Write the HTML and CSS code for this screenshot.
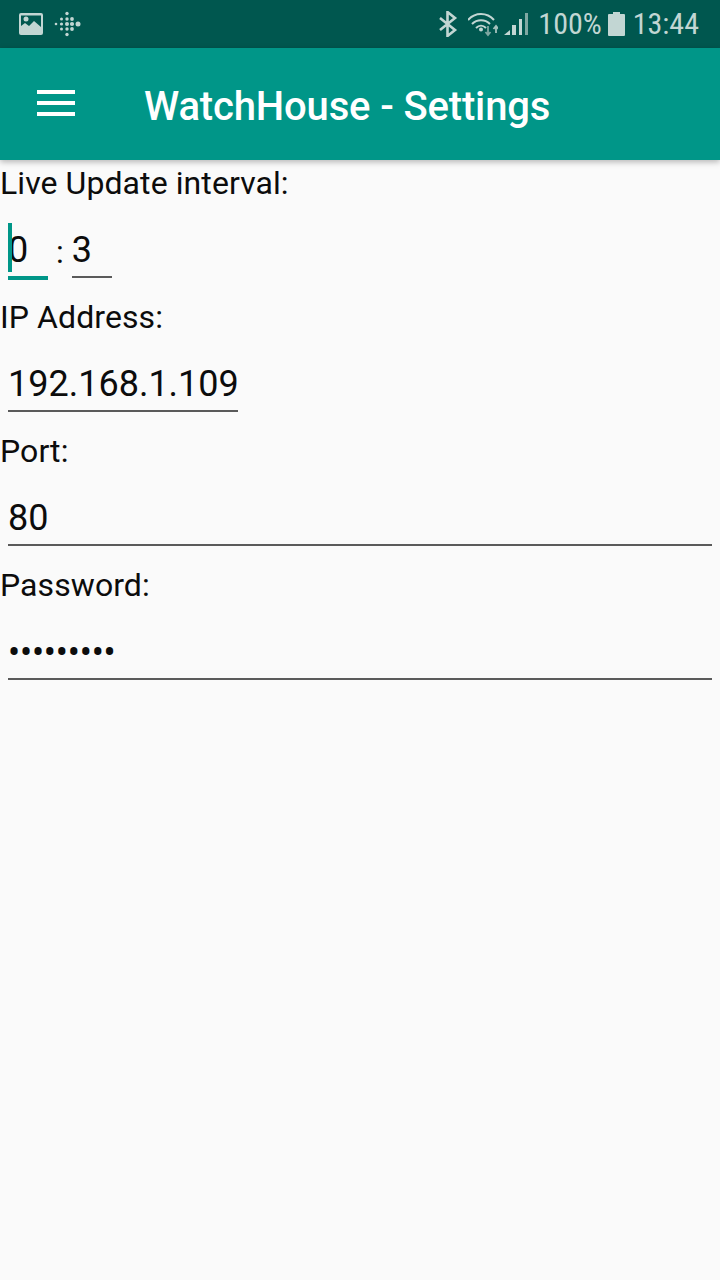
FILE: index.html
```html
<!DOCTYPE html>
<html lang="en">
<head>
<meta charset="utf-8">
<title>WatchHouse - Settings</title>
<link rel="stylesheet" href="styles.css">
</head>
<body>
<div class="status">
  <div class="status-left">
    <svg class="ic-pic" width="26" height="24" viewBox="0 0 26 24"><path fill="#c2d6d3" fill-rule="evenodd" d="M3 1h20a2 2 0 0 1 2 2v18a2 2 0 0 1-2 2H3a2 2 0 0 1-2-2V3a2 2 0 0 1 2-2zm0 2.500V14l4-3 4 3 5-5 7 6V3.500H3z"/><circle cx="8" cy="7" r="2.500" fill="#c2d6d3"/></svg>
    <svg class="ic-fit" width="28" height="26" viewBox="0 0 28 26" fill="#c2d6d3"><circle cx="14" cy="2.500" r="1.700"/><circle cx="3" cy="13" r="1.300"/><circle cx="8.500" cy="8" r="1.500"/><circle cx="8.500" cy="13" r="1.600"/><circle cx="8.500" cy="18" r="1.500"/><circle cx="14" cy="8" r="1.700"/><circle cx="14" cy="13" r="2"/><circle cx="14" cy="18" r="1.700"/><circle cx="19" cy="8" r="1.900"/><circle cx="19" cy="13" r="2.100"/><circle cx="19" cy="18" r="1.900"/><circle cx="25" cy="13" r="2.500"/><circle cx="14" cy="23.500" r="1.700"/></svg>
  </div>
  <div class="status-right">
    <svg class="ic-bt" width="20" height="26" viewBox="0 0 20 26" fill="none" stroke="#c2d6d3" stroke-width="2.600"><path d="M2 7l15 12-7.500 6V1L17 7 2 19"/></svg>
    <svg class="ic-wifi" width="30" height="26" viewBox="0 0 30 26" fill="none"><path d="M0 9C7 1 19 1 26 9M4 13c5-5 13-5 18 0M8 17c3-3 7-3 10 0" stroke="#c2d6d3" stroke-width="2"/><circle cx="13" cy="18.500" r="2" fill="#c2d6d3"/><path d="M20 15v9M17.500 21l2.500 3 2.500-3" stroke="#7fa8a2" stroke-width="1.800"/><path d="M28 22v-7M25.500 18l2.500-3 2.500 3" stroke="#a5c2bd" stroke-width="1.800"/></svg>
    <svg class="ic-sig" width="24" height="26" viewBox="0 0 24 26"><path fill="#c2d6d3" d="M0 24l6-5v5z"/><rect x="8" y="14" width="4" height="10" fill="#c2d6d3"/><rect x="15" y="8" width="3" height="16" fill="#c2d6d3"/><rect x="21" y="2" width="3" height="22" fill="#7fa8a2"/></svg>
    <span class="pct">100%</span>
    <svg class="ic-bat" width="17" height="24" viewBox="0 0 17 24"><path fill="#c2d6d3" d="M5 0h7v2h4a1 1 0 0 1 1 1v20a1 1 0 0 1-1 1H1a1 1 0 0 1-1-1V3a1 1 0 0 1 1-1h4z"/></svg>
    <span class="time">13:44</span>
  </div>
</div>
<header class="appbar">
  <div class="menu"><span></span><span></span><span></span></div>
  <h1 class="title">WatchHouse - Settings</h1>
</header>
<main class="form">
  <section class="field">
    <div class="label">Live Update interval:</div>
    <div class="interval">
      <div class="input input-short input-focus"><span class="caret"></span>0</div>
      <span class="colon">:</span>
      <div class="input input-short">3</div>
    </div>
  </section>
  <section class="field">
    <div class="label">IP Address:</div>
    <div class="input input-ip">192.168.1.109</div>
  </section>
  <section class="field">
    <div class="label">Port:</div>
    <div class="input input-wide">80</div>
  </section>
  <section class="field">
    <div class="label">Password:</div>
    <div class="input input-wide input-pass">•••••••••</div>
  </section>
</main>
</body>
</html>
```
FILE: styles.css
```css
* { box-sizing: border-box; }
html, body { margin: 0; padding: 0; }
body {
  width: 720px;
  height: 1280px;
  overflow: hidden;
  background: #fafafa;
  font-family: Roboto, "Noto Sans", sans-serif;
  color: #0c0c0c;
}
.status {
  height: 48px;
  background: #00574f;
  display: flex;
  justify-content: space-between;
  align-items: center;
  padding: 0 21px 0 18px;
  color: #c2d6d3;
}
.status-left, .status-right { display: flex; align-items: center; }
.ic-pic { margin-right: 9px; }
.ic-bt { margin-right: 10px; }
.ic-wifi { margin-right: 6px; }
.ic-sig { margin-right: 10px; }
.pct, .time { font-size: 30px; line-height: 48px; font-stretch: condensed; }
.pct { margin-right: 6px; }
.ic-bat { margin-right: 8px; }
.appbar {
  height: 112px;
  background: #009688;
  display: flex;
  align-items: center;
  box-shadow: 0 2px 6px rgba(0, 0, 0, 0.28);
  position: relative;
}
.menu {
  width: 38px;
  margin-left: 37px;
  display: flex;
  flex-direction: column;
  gap: 7px;
  margin-bottom: 2px;
}
.menu span { height: 4px; background: #fff; }
.title {
  margin: 0 0 0 69px;
  font-size: 40px;
  font-weight: 500;
  color: #fff;
  letter-spacing: -0.15px;
  line-height: 48px;
  padding-top: 6px;
}
.field { height: 134px; display: flex; flex-direction: column; }
.label {
  font-size: 32px;
  letter-spacing: 0.08px;
  line-height: 46px;
  height: 46px;
}
.input {
  position: relative;
  margin: 18px 8px 0;
  height: 54px;
  font-size: 36px;
  line-height: 44px;
  padding-top: 4px;
  border-bottom: 2px solid #5a5a5a;
}
.interval { display: flex; align-items: flex-start; }
.input-short { width: 40px; margin: 18px 0 0; }
.input-short:first-child { margin-left: 8px; }
.colon { font-size: 32px; margin: 26px 8px 0 8px; line-height: 40px; }
.input-focus { border-bottom: 4px solid #009688; height: 56px; }
.caret {
  position: absolute;
  left: 0;
  top: -1px;
  width: 4px;
  height: 49px;
  background: #009688;
}
.input-ip { width: 230px; }
.input-wide { width: 704px; }
.input-pass { letter-spacing: -0.2px; padding-top: 5px; }
```
